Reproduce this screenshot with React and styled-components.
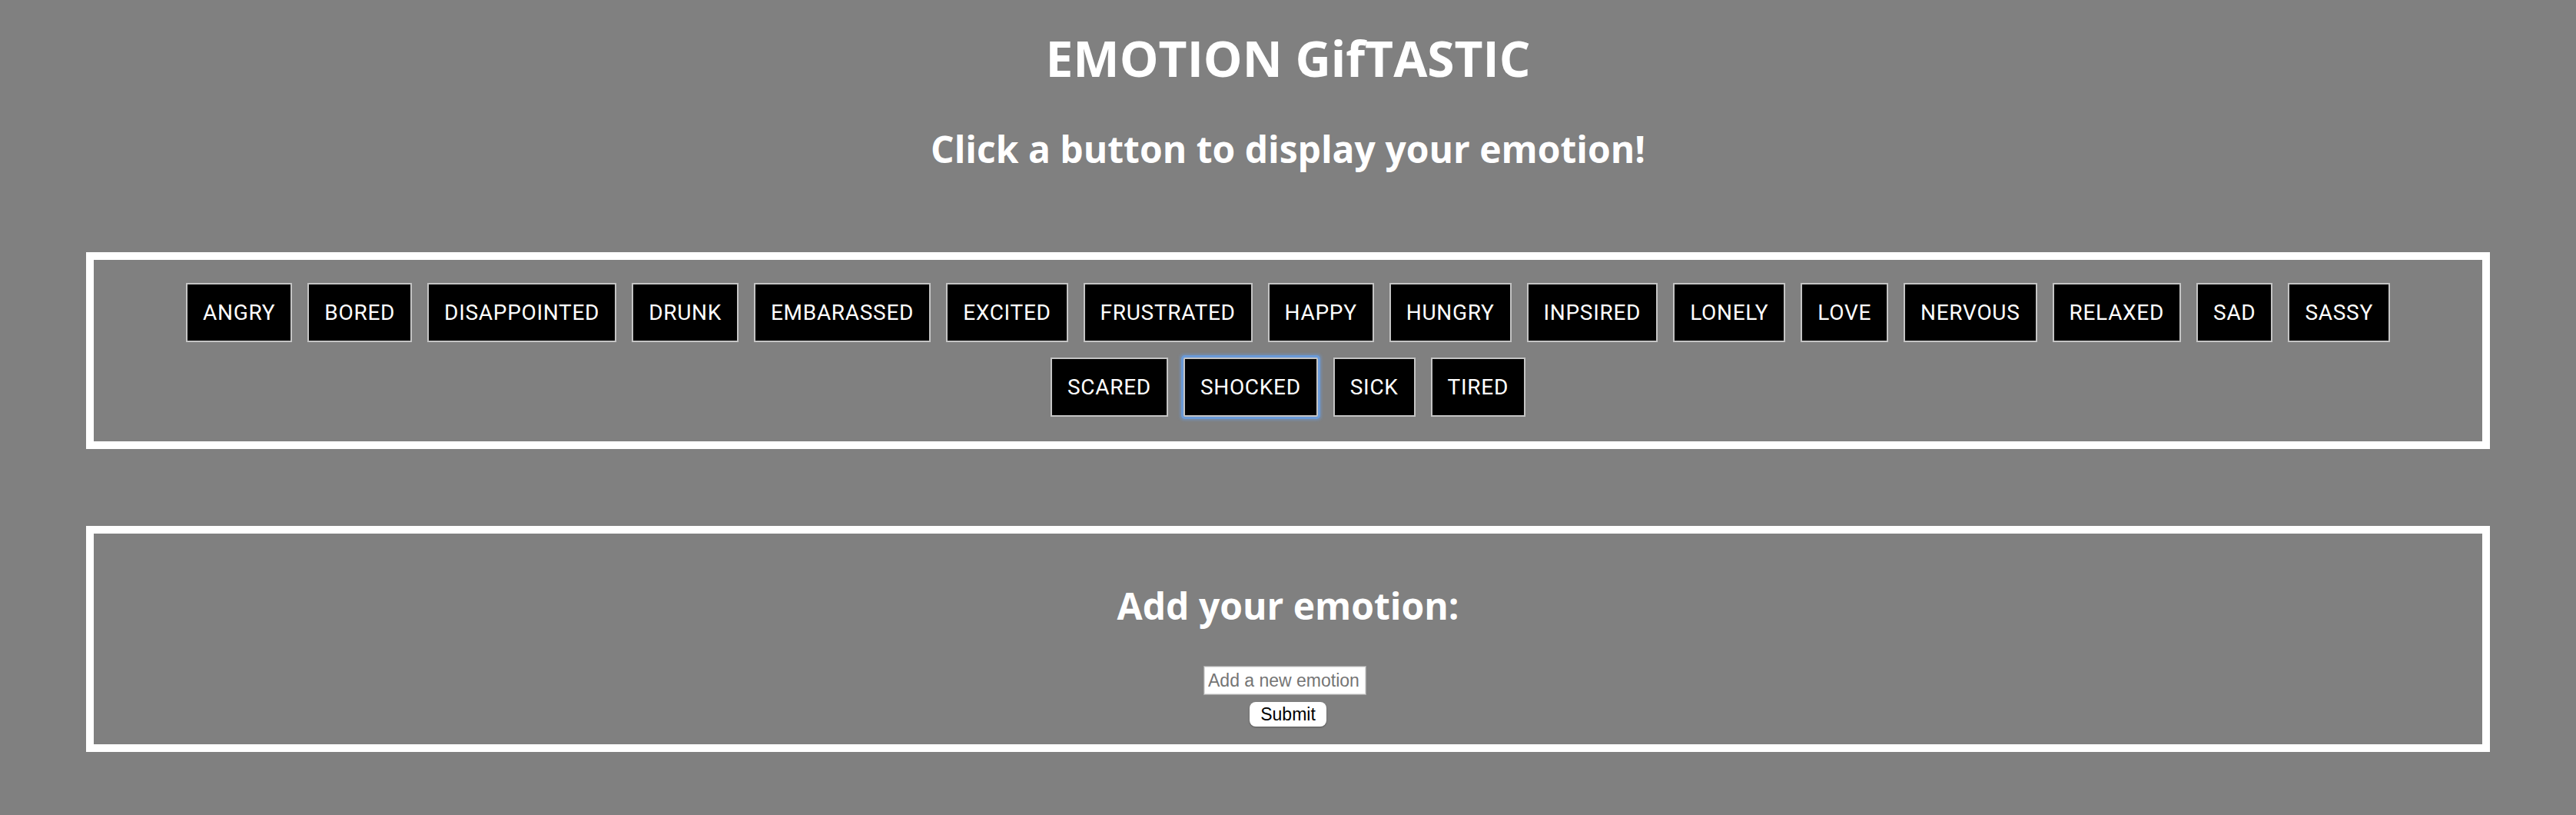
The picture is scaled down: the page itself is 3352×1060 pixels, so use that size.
import React from "react";
import styled, { createGlobalStyle, css } from "styled-components";

const GlobalStyle = createGlobalStyle`
  body {
    margin: 0;
    background: #808080;
    font-family: "Open Sans", sans-serif;
  }
`;

const Page = styled.div`
  display: flex;
  flex-direction: column;
  align-items: stretch;
`;

const Title = styled.h1`
  margin: 32px 0 0;
  color: #fff;
  font-size: 64px;
  font-weight: 700;
  line-height: 87px;
  text-align: center;
`;

const Subtitle = styled.h2`
  margin: ${(p) => p.$top || "42px"} 0 0;
  color: #fff;
  font-size: 48px;
  font-weight: 700;
  line-height: 65px;
  text-align: center;
`;

const Panel = styled.section`
  margin: ${(p) => p.$top} 112px 0;
  border: 10px solid #fff;
  padding: ${(p) => p.$pad};
  display: flex;
  flex-direction: column;
  align-items: center;
`;

const ButtonRow = styled.div`
  display: flex;
  flex-wrap: wrap;
  justify-content: center;
`;

const EmotionButton = styled.button`
  margin: 10px;
  padding: 20px;
  background: #000;
  color: #fff;
  border: 2px solid #c4c4c4;
  font-family: Roboto, "Liberation Sans", sans-serif;
  font-size: 28px;
  letter-spacing: 0.7px;
  line-height: 33px;
  cursor: pointer;
  ${(p) =>
    p.$focused &&
    css`
      outline: none;
      border-radius: 2px;
      box-shadow: 0 0 0 3px #6a9ad8, 0 0 3px 5px rgba(106, 154, 216, 0.45);
    `}
`;

const Form = styled.form`
  display: flex;
  flex-direction: column;
  align-items: center;
  margin-top: 46px;
`;

const TextInput = styled.input`
  box-sizing: border-box;
  width: 212px;
  height: 38px;
  margin-right: 8px;
  padding: 0 5px;
  border: 1px solid #a8a8a8;
  box-shadow: inset 0 0 0 1px #dedede;
  background: #fff;
  font-family: "Liberation Sans", Arial, sans-serif;
  font-size: 23px;
  color: #222;
  &::placeholder {
    color: #757575;
  }
`;

const SubmitButton = styled.button`
  margin-top: 9px;
  width: 100px;
  height: 32px;
  padding: 0;
  border: none;
  border-radius: 8px;
  background: #fff;
  box-shadow: 0 1px 2px rgba(0, 0, 0, 0.35);
  color: #000;
  font-family: "Liberation Sans", Arial, sans-serif;
  font-size: 23px;
  line-height: 32px;
`;

const emotions = [
  "ANGRY", "BORED", "DISAPPOINTED", "DRUNK", "EMBARASSED", "EXCITED",
  "FRUSTRATED", "HAPPY", "HUNGRY", "INPSIRED", "LONELY", "LOVE",
  "NERVOUS", "RELAXED", "SAD", "SASSY", "SCARED", "SHOCKED", "SICK", "TIRED",
];

export default function App() {
  return (
    <Page>
      <GlobalStyle />
      <Title>EMOTION GifTASTIC</Title>
      <Subtitle>Click a button to display your emotion!</Subtitle>

      <Panel $top="102px" $pad="20px 60px 22px">
        <ButtonRow>
          {emotions.map((e) => (
            <EmotionButton key={e} $focused={e === "SHOCKED"}>
              {e}
            </EmotionButton>
          ))}
        </ButtonRow>
      </Panel>

      <Panel $top="100px" $pad="20px 20px 23px">
        <Subtitle $top="41px">Add your emotion:</Subtitle>
        <Form onSubmit={(ev) => ev.preventDefault()}>
          <TextInput type="text" placeholder="Add a new emotion" />
          <SubmitButton type="submit">Submit</SubmitButton>
        </Form>
      </Panel>
    </Page>
  );
}
